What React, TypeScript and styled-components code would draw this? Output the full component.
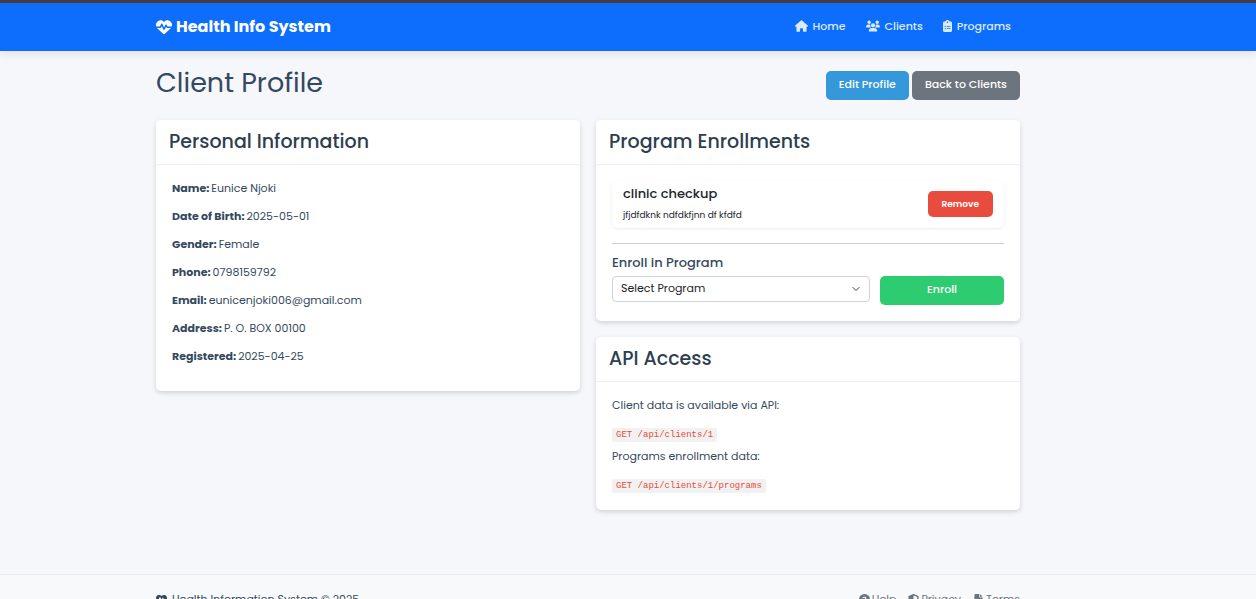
import React from 'react';
import styled, { createGlobalStyle } from 'styled-components';
import {
  FaCircleQuestion,
  FaClipboardList,
  FaFileLines,
  FaHeartPulse,
  FaHouse,
  FaShieldHalved,
  FaUsers,
} from 'react-icons/fa6';

const GlobalStyle = createGlobalStyle`
  *, *::before, *::after { box-sizing: border-box; }
  body {
    margin: 0;
    background: #f5f7fb;
    color: #34495e;
    font-family: Poppins, Inter, "Open Sans", sans-serif;
    font-size: 11px;
    line-height: 20px;
  }
  h1, h2, h3, p, ul, dl, dd { margin: 0; padding: 0; }
  button, select { font-family: inherit; }
`;

const Container = styled.div`
  padding: 0 236px 0 156px;
`;

const Navbar = styled.header`
  background: #0d6efd;
  border-top: 3px solid #4b3a40;
  box-shadow: 0 2px 10px rgba(0, 0, 0, 0.1);
`;

const Bar = styled(Container)`
  display: flex;
  align-items: center;
  justify-content: space-between;
  height: 48px;
`;

const Brand = styled.a`
  display: flex;
  align-items: center;
  gap: 4px;
  color: #fff;
  font-size: 16px;
  font-weight: 700;
  text-decoration: none;
`;

const NavLinks = styled.nav`
  display: flex;
  gap: 20px;
  padding: 0 9px 2px 0;
`;

const NavLink = styled.a<{ $iconWidth: number }>`
  display: flex;
  align-items: center;
  gap: 5px;
  color: #dbe9ff;
  font-weight: 500;
  text-decoration: none;

  svg {
    width: ${(p) => p.$iconWidth}px;
    height: 12px;
  }
`;

const PageHead = styled.div`
  display: flex;
  align-items: flex-start;
  justify-content: space-between;
  padding: 14px 0 19px;
`;

const PageTitle = styled.h1`
  font-size: 27px;
  font-weight: 400;
  line-height: 36px;
`;

const Actions = styled.div`
  display: flex;
  gap: 3px;
  padding-top: 6px;
`;

const tones = {
  blue: '#3498db',
  gray: '#6c757d',
  red: '#e74c3c',
  green: '#2ecc71',
};

const Button = styled.button<{ $tone: keyof typeof tones; $small?: boolean }>`
  height: ${(p) => (p.$small ? 26 : 29)}px;
  padding: ${(p) => (p.$small ? '0 14px' : '0 13px 2px')};
  border: 0;
  border-radius: 5px;
  background: ${(p) => tones[p.$tone]};
  color: #fff;
  font-size: ${(p) => (p.$small ? 9 : 11)}px;
  font-weight: ${(p) => (p.$small ? 600 : 500)};
  white-space: nowrap;
  cursor: pointer;
`;

const Columns = styled.main`
  display: grid;
  grid-template-columns: 1fr 1fr;
  align-items: start;
  gap: 16px;
`;

const Stack = styled.div`
  display: grid;
  gap: 16px;
`;

const Card = styled.section`
  background: #fff;
  border-radius: 5px;
  box-shadow: 0 2px 5px rgba(0, 0, 0, 0.15);
`;

const CardTitle = styled.h2`
  padding: 9px 13px 10px;
  border-bottom: 1px solid #eff0f1;
  color: #2c3e50;
  font-size: 19px;
  font-weight: 500;
  line-height: 25px;
`;

const CardBody = styled.div`
  padding: 16px;
`;

const ApiBody = styled.div`
  padding: 14px 16px 12px;
`;

const Details = styled.dl`
  padding: 9px 16px 21px;
`;

const Detail = styled.div`
  display: flex;
  gap: 2px;
  line-height: 28px;

  dt {
    font-weight: 700;
  }
`;

const Enrollment = styled.div`
  display: flex;
  align-items: center;
  justify-content: space-between;
  padding: 2px 11px 3px;
  border-radius: 5px;
  box-shadow: 0 1px 3px rgba(0, 0, 0, 0.08);
  color: #212529;
`;

const EnrollmentName = styled.h3`
  font-size: 13px;
  font-weight: 500;
  line-height: 22px;
`;

const EnrollmentNote = styled.p`
  font-size: 9px;
`;

const Divider = styled.hr`
  margin: 15px 0 9px;
  border: 0;
  border-top: 1px solid #ccd1d5;
`;

const EnrollForm = styled.form`
  display: grid;
  grid-template-columns: 258fr 124fr;
  align-items: start;
  column-gap: 10px;
`;

const FormLabel = styled.label`
  grid-column: 1 / -1;
  padding-bottom: 3px;
  font-size: 13px;
  font-weight: 500;
`;

const SelectWrap = styled.div`
  display: grid;
  align-items: center;

  > * {
    grid-area: 1 / 1;
  }

  svg {
    justify-self: end;
    margin-right: 10px;
    pointer-events: none;
  }
`;

const Select = styled.select`
  appearance: none;
  width: 100%;
  height: 26px;
  padding: 0 24px 2px 8px;
  border: 1px solid #ced4da;
  border-radius: 4px;
  background: #fff;
  color: #212529;
  font-size: 11px;
`;

const ApiText = styled.p`
  line-height: 18px;
`;

const Endpoint = styled.p`
  padding: 10px 0 3px;
  line-height: 18px;
`;

const Code = styled.code`
  padding: 2px 4px;
  border-radius: 2px;
  background: #f1f1f1;
  color: #e74c3c;
  font-family: "Courier New", "Liberation Mono", monospace;
  font-size: 9px;
`;

const Footer = styled.footer`
  margin-top: 64px;
  border-top: 1px solid #e9ebee;
  background: #f8f9fa;
`;

const FooterRow = styled(Container)`
  display: flex;
  justify-content: space-between;
  padding-top: 14px;
  padding-bottom: 14px;
`;

const FooterNote = styled.p`
  display: flex;
  align-items: center;
  gap: 5px;
`;

const FooterLinks = styled.nav`
  display: flex;
  gap: 12px;
`;

const FooterLink = styled.a`
  display: flex;
  align-items: center;
  gap: 2px;
  color: #6c757d;
  text-decoration: none;
`;

const details = [
  ['Name:', 'Eunice Njoki'],
  ['Date of Birth:', '2025-05-01'],
  ['Gender:', 'Female'],
  ['Phone:', '0798159792'],
  ['Email:', 'eunicenjoki006@gmail.com'],
  ['Address:', 'P. O. BOX 00100'],
  ['Registered:', '2025-04-25'],
];

export default function App() {
  return (
    <>
      <GlobalStyle />
      <Navbar>
        <Bar>
          <Brand href="#"><FaHeartPulse />Health Info System</Brand>
          <NavLinks>
            <NavLink href="#" $iconWidth={13}><FaHouse />Home</NavLink>
            <NavLink href="#" $iconWidth={14}><FaUsers />Clients</NavLink>
            <NavLink href="#" $iconWidth={9}><FaClipboardList />Programs</NavLink>
          </NavLinks>
        </Bar>
      </Navbar>
      <Container>
        <PageHead>
          <PageTitle>Client Profile</PageTitle>
          <Actions>
            <Button type="button" $tone="blue">Edit Profile</Button>
            <Button type="button" $tone="gray">Back to Clients</Button>
          </Actions>
        </PageHead>
        <Columns>
          <Card>
            <CardTitle>Personal Information</CardTitle>
            <Details>
              {details.map(([label, value]) => (
                <Detail key={label}>
                  <dt>{label}</dt>
                  <dd>{value}</dd>
                </Detail>
              ))}
            </Details>
          </Card>
          <Stack>
            <Card>
              <CardTitle>Program Enrollments</CardTitle>
              <CardBody>
                <Enrollment>
                  <div>
                    <EnrollmentName>clinic checkup</EnrollmentName>
                    <EnrollmentNote>jfjdfdknk ndfdkfjnn df kfdfd</EnrollmentNote>
                  </div>
                  <Button type="button" $tone="red" $small>Remove</Button>
                </Enrollment>
                <Divider />
                <EnrollForm>
                  <FormLabel htmlFor="program">Enroll in Program</FormLabel>
                  <SelectWrap>
                    <Select id="program">
                      <option>Select Program</option>
                    </Select>
                    <svg width="8" height="8" viewBox="0 0 16 16" fill="none" stroke="#343a40" strokeWidth="2" strokeLinecap="round" strokeLinejoin="round">
                      <path d="m2 5 6 6 6-6" />
                    </svg>
                  </SelectWrap>
                  <Button type="button" $tone="green">Enroll</Button>
                </EnrollForm>
              </CardBody>
            </Card>
            <Card>
              <CardTitle>API Access</CardTitle>
              <ApiBody>
                <ApiText>Client data is available via API:</ApiText>
                <Endpoint><Code>GET /api/clients/1</Code></Endpoint>
                <ApiText>Programs enrollment data:</ApiText>
                <Endpoint><Code>GET /api/clients/1/programs</Code></Endpoint>
              </ApiBody>
            </Card>
          </Stack>
        </Columns>
      </Container>
      <Footer>
        <FooterRow>
          <FooterNote><FaHeartPulse />Health Information System © 2025</FooterNote>
          <FooterLinks>
            <FooterLink href="#"><FaCircleQuestion />Help</FooterLink>
            <FooterLink href="#"><FaShieldHalved />Privacy</FooterLink>
            <FooterLink href="#"><FaFileLines />Terms</FooterLink>
          </FooterLinks>
        </FooterRow>
      </Footer>
    </>
  );
}
